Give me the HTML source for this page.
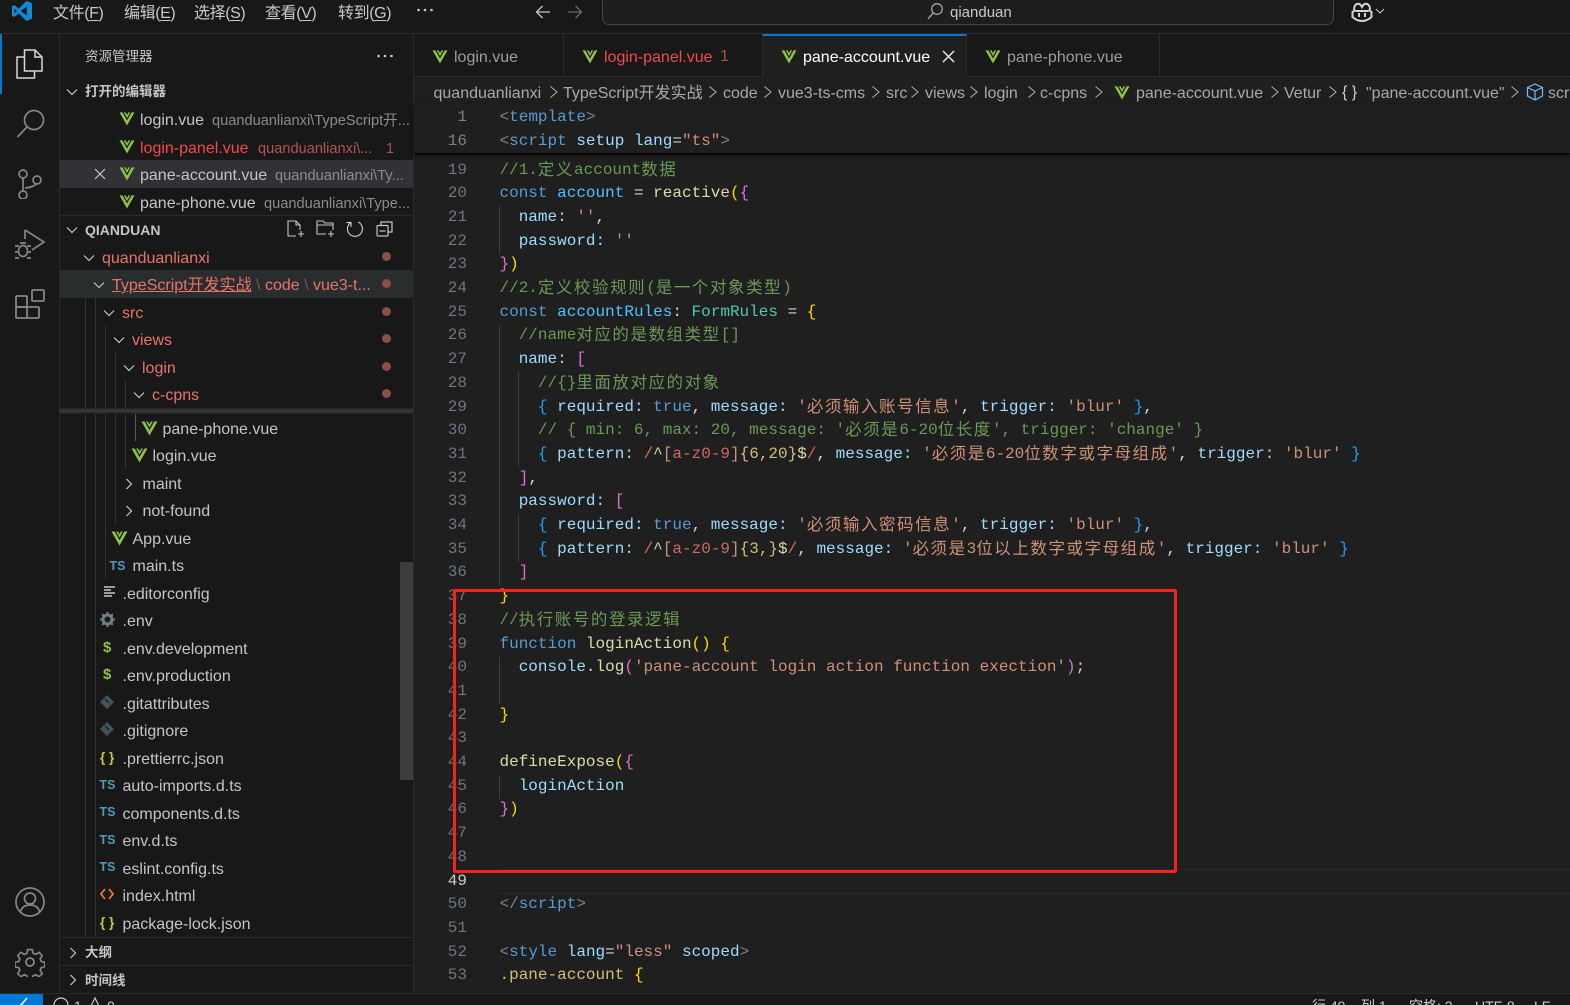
<!DOCTYPE html>
<html><head><meta charset="utf-8"><title>qianduan</title>
<style>
html,body{margin:0;padding:0;background:#1f1f1f}
body{position:relative;width:1570px;height:1005px;overflow:hidden;font-family:"Liberation Sans","Noto Sans CJK SC",sans-serif;font-size:16px;color:#ccc}
div,span.a,svg.a{box-sizing:border-box}
.b,.t,svg.a{position:absolute}
.t{white-space:pre;line-height:20px;height:20px;margin-top:2px}
#st .t{margin-top:0}
svg.a:has(use[href="#vue"]),svg.a:has(use[href="#chv"]),svg.a:has(use[href="#chr"]){margin-top:1px}
.d{font-size:14.6px;color:#8c8c8c}
.r{color:#e8746a}
.f{color:#c5c5c5}
.m{color:#c8c8c8;letter-spacing:-.4px}
.m u{text-underline-offset:2px}
.ts{font-size:12.5px;font-weight:bold;color:#519aba;margin-top:1px}
#code{position:absolute;left:0;top:.5px;width:1570px;font-family:"Liberation Mono","Noto Sans CJK SC",monospace;font-size:16px;color:#d4d4d4}
.l{position:absolute;left:499.5px;white-space:pre;line-height:24px;height:24px}
.n{position:absolute;left:421px;width:46px;text-align:right;color:#6e7681;font-family:"Liberation Mono",monospace;font-size:16px;line-height:24px;height:24px}
.z{font-size:16.5px;letter-spacing:1.55px;font-family:"Noto Sans CJK SC",sans-serif;line-height:1;position:relative;top:1px}
.k{color:#569cd6}.v{color:#9cdcfe}.w{color:#4fc1ff}.u{color:#dcdcaa}.s{color:#ce9178}.c{color:#6a9955}.y{color:#4ec9b0}.g{color:#ffd700}.p{color:#da70d6}.e{color:#d16969}.q{color:#808080}.h{color:#569cd6}.x{color:#d7ba7d}.o{color:#179fff}
.ig{position:absolute;width:1px;background:#404040}
.sg{position:absolute;width:1px;background:#333}
.dot{position:absolute;width:9px;height:9px;border-radius:50%;background:#8a4f49;left:381.5px}
</style></head><body>
<svg width="0" height="0" style="position:absolute"><defs>
<symbol id="vue" viewBox="0 0 16 16"><path d="M0 1.500h3.200L8 10l4.800-8.500H16L8 15.500z" fill="#8dc149"/><path d="M3.200 1.500h2.600L8 5.400l2.200-3.900h2.600L8 10z" fill="#1a1a1a"/><path d="M4.600 1.500h1.900L8 4.200l1.500-2.700h1.900L8 7.600z" fill="#8dc149"/></symbol>
<symbol id="chv" viewBox="0 0 16 16"><path d="M3 5.500l5 5 5-5" fill="none" stroke="#c5c5c5" stroke-width="1.200"/></symbol>
<symbol id="chr" viewBox="0 0 16 16"><path d="M5.500 3l5 5-5 5" fill="none" stroke="#c5c5c5" stroke-width="1.200"/></symbol>
<symbol id="bc" viewBox="0 0 10 16"><path d="M1.500 2.500L8 8l-6.500 5.500" fill="none" stroke="#a9a9a9" stroke-width="1.100"/></symbol>
</defs></svg>

<!-- title bar -->
<div class="b" style="left:0;top:0;width:1570px;height:34px;background:#181818;border-bottom:1px solid #2b2b2b"></div>
<svg class="a" style="left:11px;top:0" width="22" height="22" viewBox="0 0 22 22"><path d="M15.500 1L7.800 8.500 3.200 5 1 6.200v9.600L3.200 17l4.600-3.500 7.700 7.500 5.500-2.300V3.300z" fill="#0e8ad6"/><path d="M15.800 6.500L9.800 11l6 4.500z" fill="#181818"/><path d="M3.500 8.500L6 11l-2.500 2.500z" fill="#181818"/></svg>
<div class="t m" style="left:53px;top:2px">文件(<u>F</u>)</div>
<div class="t m" style="left:124px;top:2px">编辑(<u>E</u>)</div>
<div class="t m" style="left:194px;top:2px">选择(<u>S</u>)</div>
<div class="t m" style="left:265px;top:2px">查看(<u>V</u>)</div>
<div class="t m" style="left:338px;top:2px">转到(<u>G</u>)</div>
<svg class="a" style="left:416px;top:7px" width="18" height="6" fill="#c8c8c8"><circle cx="2.500" cy="3" r="1.300"/><circle cx="9" cy="3" r="1.300"/><circle cx="15.500" cy="3" r="1.300"/></svg>
<svg class="a" style="left:534px;top:3px" width="18" height="18" viewBox="0 0 18 18"><path d="M16 9H2.500M8.500 3l-6 6 6 6" fill="none" stroke="#c8c8c8" stroke-width="1.300"/></svg>
<svg class="a" style="left:566px;top:3px" width="18" height="18" viewBox="0 0 18 18"><path d="M2 9h13.500M9.500 3l6 6-6 6" fill="none" stroke="#6a6a6a" stroke-width="1.300"/></svg>
<div class="b" style="left:602px;top:-6px;width:732px;height:31px;background:#1e1e1e;border:1px solid #454545;border-radius:7px"></div>
<svg class="a" style="left:926px;top:2px" width="18" height="19" viewBox="0 0 18 19"><circle cx="11" cy="7" r="5.300" fill="none" stroke="#a0a0a0" stroke-width="1.300"/><path d="M7.200 11L2 17" stroke="#a0a0a0" stroke-width="1.400"/></svg>
<div class="t" style="left:950px;top:1px;font-size:15px;color:#c8c8c8">qianduan</div>
<svg class="a" style="left:1351px;top:2px" width="22" height="20" viewBox="0 0 22 20"><path d="M4 3.500Q6 1 8.500 2 10 3 11 5 12 3 13.500 2 16 1 18 3.500 19.500 6 18.500 8.500L20.500 10V15Q16 19 11 19 6 19 1.500 15V10L3.500 8.500Q2.500 6 4 3.500z" fill="none" stroke="#d5d5d5" stroke-width="2"/><path d="M8 11v4M14 11v4M4.500 9h13" stroke="#d5d5d5" stroke-width="2"/></svg>
<svg class="a" style="left:1374px;top:4px" width="12" height="14" viewBox="0 0 12 14"><path d="M2 5l4 4 4-4" fill="none" stroke="#c8c8c8" stroke-width="1"/></svg>

<!-- activity bar -->
<div class="b" style="left:0;top:34px;width:60px;height:959px;background:#181818;border-right:1px solid #2b2b2b"></div>
<div class="b" style="left:0;top:34px;width:2px;height:60px;background:#0078d4"></div>
<svg class="a" style="left:15px;top:48px" width="30" height="32" viewBox="0 0 30 32" fill="none" stroke="#d7d7d7" stroke-width="1.500"><path d="M9.500 2h10.500l7 7v14H9.500z"/><path d="M20 2v7h7"/><path d="M9.500 9H2v21h17.500v-7"/></svg>
<svg class="a" style="left:16px;top:108px" width="30" height="32" viewBox="0 0 30 32" fill="none" stroke="#868686" stroke-width="1.700"><circle cx="18" cy="12" r="9.500"/><path d="M11 19L1.500 29"/></svg>
<svg class="a" style="left:17px;top:167px" width="28" height="32" viewBox="0 0 28 32" fill="none" stroke="#868686" stroke-width="1.700"><circle cx="6" cy="7" r="4"/><circle cx="6" cy="28" r="4"/><circle cx="20" cy="13" r="4"/><path d="M6 11v13M19 17Q17 20 8 21"/></svg>
<svg class="a" style="left:14px;top:228px" width="32" height="32" viewBox="0 0 32 32" fill="none" stroke="#868686" stroke-width="1.700"><path d="M11 2l19 12-12 8"/><path d="M11 2v9"/><ellipse cx="9" cy="23" rx="4.500" ry="5.500"/><path d="M1 18h4M13 18h4M1 24h3M14 24h3M1 30h4M13 30h4M6 15h6"/></svg>
<svg class="a" style="left:15px;top:288px" width="32" height="32" viewBox="0 0 32 32" fill="none" stroke="#868686" stroke-width="1.800"><rect x="1" y="8" width="11" height="11" rx="1"/><rect x="1" y="19" width="23" height="11" rx="1"/><path d="M12 19v11"/><rect x="17" y="2" width="12" height="11" rx="1"/></svg>
<svg class="a" style="left:15px;top:887px" width="30" height="30" viewBox="0 0 30 30" fill="none" stroke="#868686" stroke-width="1.700"><circle cx="15" cy="15" r="14"/><circle cx="15" cy="11.500" r="5.500"/><path d="M5.500 25Q7 18 15 18t9.500 7"/></svg>
<svg class="a" style="left:15px;top:947px" width="30" height="30" viewBox="0 0 30 30" fill="none" stroke="#868686" stroke-width="1.800"><circle cx="15" cy="15" r="4"/><path d="M12.500 1.500h5l.8 4 3 1.300 3.500-2.300 3.500 3.500-2.300 3.500 1.300 3 4 .8v0 0l-.3 0v5l-3.700.8-1.300 3 2.300 3.500-3.500 3.500-3.500-2.300-3 1.300-.8 4h-5l-.8-4-3-1.300-3.500 2.300-3.500-3.500 2.300-3.500-1.300-3-4-.8v-5l4-.8 1.300-3-2.300-3.500 3.500-3.500 3.500 2.300 3-1.300z" transform="translate(1.200 1.200) scale(.92)"/></svg>

<!-- sidebar -->
<div class="b" style="left:60px;top:34px;width:354px;height:959px;background:#181818;border-right:1px solid #2b2b2b"></div>
<div class="t" style="left:85px;top:45px;font-size:13.5px;color:#c5c5c5">资源管理器</div>
<svg class="a" style="left:376px;top:53px" width="18" height="6" fill="#c8c8c8"><circle cx="2.500" cy="3" r="1.300"/><circle cx="9" cy="3" r="1.300"/><circle cx="15.500" cy="3" r="1.300"/></svg>
<svg class="a" style="left:64px;top:83px" width="16" height="16"><use href="#chv"/></svg>
<div class="t" style="left:85px;top:80px;font-size:13.5px;font-weight:bold;color:#c5c5c5">打开的编辑器</div>
<div class="b" style="left:60px;top:160px;width:353px;height:28px;background:#323236"></div>
<svg class="a" style="left:119px;top:110px" width="16" height="15"><use href="#vue"/></svg>
<div class="t" style="left:140px;top:109px;color:#c5c5c5">login.vue</div>
<div class="t d" style="left:212px;top:109px;width:198px;overflow:hidden">quanduanlianxi\TypeScript开...</div>
<svg class="a" style="left:119px;top:138px" width="16" height="15"><use href="#vue"/></svg>
<div class="t" style="left:140px;top:137px;color:#f14c4c">login-panel.vue</div>
<div class="t d" style="left:258px;top:137px;color:#b0564e">quanduanlianxi\...</div>
<div class="t" style="left:386px;top:137px;font-size:14.500px;color:#a9564e">1</div>
<svg class="a" style="left:93px;top:167px" width="14" height="14" viewBox="0 0 14 14"><path d="M2 2l10 10M12 2L2 12" stroke="#c8c8c8" stroke-width="1.200"/></svg>
<svg class="a" style="left:119px;top:165px" width="16" height="15"><use href="#vue"/></svg>
<div class="t" style="left:140px;top:164px;color:#c5c5c5">pane-account.vue</div>
<div class="t d" style="left:275px;top:164px">quanduanlianxi\Ty...</div>
<svg class="a" style="left:119px;top:193px" width="16" height="15"><use href="#vue"/></svg>
<div class="t" style="left:140px;top:192px;color:#c5c5c5">pane-phone.vue</div>
<div class="t d" style="left:264px;top:192px;width:147px;overflow:hidden">quanduanlianxi\Type...</div>
<div class="b" style="left:60px;top:215px;width:353px;height:1px;background:#2b2b2b"></div>
<svg class="a" style="left:64px;top:221px" width="16" height="16"><use href="#chv"/></svg>
<div class="t" style="left:85px;top:218px;font-size:14px;font-weight:bold;color:#c5c5c5">QIANDUAN</div>
<svg class="a" style="left:287px;top:220px" width="18" height="18" viewBox="0 0 18 18" fill="none" stroke="#c5c5c5" stroke-width="1.100"><path d="M9 16H1V1h8l4 4v5M9 1v4h4M14 11v6M11 14h6"/></svg>
<svg class="a" style="left:316px;top:220px" width="20" height="18" viewBox="0 0 20 18" fill="none" stroke="#c5c5c5" stroke-width="1.100"><path d="M10 14H1V1h6l2 2h8v7M1 5h16M15 11v6M12 14h6"/></svg>
<svg class="a" style="left:346px;top:220px" width="18" height="18" viewBox="0 0 18 18" fill="none" stroke="#c5c5c5" stroke-width="1.200"><path d="M5 2.500A7.500 7.500 0 1 0 12 2M5 7V2.500H.5"/></svg>
<svg class="a" style="left:376px;top:221px" width="17" height="16" viewBox="0 0 17 16" fill="none" stroke="#c5c5c5" stroke-width="1.200"><path d="M5 4V1h11v10h-4"/><rect x="1" y="4.500" width="11" height="10.500" rx="1"/><path d="M3.500 10h6"/></svg>

<svg class="a" style="left:81px;top:249px" width="16" height="16"><use href="#chv"/></svg>
<div class="t r" style="left:102px;top:247px">quanduanlianxi</div>
<div class="dot" style="top:252px"></div>
<div class="b" style="left:60px;top:270px;width:353px;height:28px;background:#2a2d2e"></div>
<svg class="a" style="left:91px;top:276px" width="16" height="16"><use href="#chv"/></svg>
<div class="t r" style="left:112px;top:274px"><span style="text-decoration:underline">TypeScript开发实战</span><span style="color:#7a5550"> \ </span>code<span style="color:#7a5550"> \ </span>vue3-t...</div>
<div class="dot" style="top:279px"></div>
<svg class="a" style="left:101px;top:304px" width="16" height="16"><use href="#chv"/></svg>
<div class="t r" style="left:122px;top:302px">src</div><div class="dot" style="top:307px"></div>
<svg class="a" style="left:111px;top:331px" width="16" height="16"><use href="#chv"/></svg>
<div class="t r" style="left:132px;top:329px">views</div><div class="dot" style="top:334px"></div>
<svg class="a" style="left:121px;top:359px" width="16" height="16"><use href="#chv"/></svg>
<div class="t r" style="left:142px;top:357px">login</div><div class="dot" style="top:362px"></div>
<svg class="a" style="left:131px;top:386px" width="16" height="16"><use href="#chv"/></svg>
<div class="t r" style="left:152px;top:384px">c-cpns</div><div class="dot" style="top:389px"></div>

<!-- tree guides -->
<div class="sg" style="left:85px;top:298px;height:640px"></div>
<div class="sg" style="left:95px;top:298px;height:640px"></div>
<div class="sg" style="left:105px;top:326px;height:253px"></div>
<div class="sg" style="left:115px;top:353px;height:171px"></div>
<div class="sg" style="left:125px;top:380px;height:89px"></div>
<div class="sg" style="left:135px;top:408px;height:33px;background:#585858"></div>
<div class="b" style="left:60px;top:408px;width:353px;height:6px;background:linear-gradient(#26262a,#3b3b3f 60%,#1c1c1c)"></div>

<svg class="a" style="left:141px;top:419px" width="17" height="16"><use href="#vue"/></svg>
<div class="t f" style="left:162.500px;top:418px">pane-phone.vue</div>
<svg class="a" style="left:131px;top:446px" width="17" height="16"><use href="#vue"/></svg>
<div class="t f" style="left:152.500px;top:445px">login.vue</div>
<svg class="a" style="left:121px;top:475px" width="16" height="16"><use href="#chr"/></svg>
<div class="t f" style="left:142.500px;top:473px">maint</div>
<svg class="a" style="left:121px;top:502px" width="16" height="16"><use href="#chr"/></svg>
<div class="t f" style="left:142.500px;top:500px">not-found</div>
<svg class="a" style="left:111px;top:529px" width="17" height="16"><use href="#vue"/></svg>
<div class="t f" style="left:132.500px;top:528px">App.vue</div>
<div class="t ts" style="left:109.500px;top:555px">TS</div>
<div class="t f" style="left:132.500px;top:555px">main.ts</div>

<svg class="a" style="left:103px;top:585px" width="13" height="14" viewBox="0 0 13 14" stroke="#c8c8c8" stroke-width="1.500"><path d="M1 2h11M1 5h7M1 8h11M1 11h8"/></svg>
<div class="t f" style="left:122.500px;top:583px">.editorconfig</div>
<svg class="a" style="left:100px;top:612px" width="15" height="15" viewBox="0 0 15 15"><circle cx="7.500" cy="7.500" r="4.500" fill="none" stroke="#6d8086" stroke-width="3"/><path d="M7.500 0v3M7.500 12v3M0 7.500h3M12 7.500h3M2.200 2.200l2 2M10.800 10.800l2 2M12.800 2.200l-2 2M4.200 10.800l-2 2" stroke="#6d8086" stroke-width="2"/></svg>
<div class="t f" style="left:122.500px;top:610px">.env</div>
<div class="t" style="left:103px;top:636px;font-size:15px;font-weight:bold;color:#8dc149">$</div>
<div class="t f" style="left:122.500px;top:638px">.env.development</div>
<div class="t" style="left:103px;top:663px;font-size:15px;font-weight:bold;color:#8dc149">$</div>
<div class="t f" style="left:122.500px;top:665px">.env.production</div>
<svg class="a" style="left:100px;top:695px" width="14" height="14" viewBox="0 0 14 14"><path d="M7 0l7 7-7 7-7-7z" fill="#41535b"/><path d="M5 4l4 4" stroke="#181818" stroke-width="1.200"/></svg>
<div class="t f" style="left:122.500px;top:693px">.gitattributes</div>
<svg class="a" style="left:100px;top:722px" width="14" height="14" viewBox="0 0 14 14"><path d="M7 0l7 7-7 7-7-7z" fill="#41535b"/><path d="M5 4l4 4" stroke="#181818" stroke-width="1.200"/></svg>
<div class="t f" style="left:122.500px;top:720px">.gitignore</div>
<div class="t" style="left:100px;top:746px;font-size:13.500px;font-weight:bold;color:#cbcb41">{ }</div>
<div class="t f" style="left:122.500px;top:748px">.prettierrc.json</div>
<div class="t ts" style="left:99.500px;top:774px">TS</div>
<div class="t f" style="left:122.500px;top:775px">auto-imports.d.ts</div>
<div class="t ts" style="left:99.500px;top:801px">TS</div>
<div class="t f" style="left:122.500px;top:803px">components.d.ts</div>
<div class="t ts" style="left:99.500px;top:829px">TS</div>
<div class="t f" style="left:122.500px;top:830px">env.d.ts</div>
<div class="t ts" style="left:99.500px;top:856px">TS</div>
<div class="t f" style="left:122.500px;top:858px">eslint.config.ts</div>
<svg class="a" style="left:100px;top:887px" width="14" height="14" viewBox="0 0 14 14" fill="none" stroke="#e37933" stroke-width="1.800"><path d="M5 2L1 7l4 5M9 2l4 5-4 5"/></svg>
<div class="t f" style="left:122.500px;top:885px">index.html</div>
<div class="t" style="left:100px;top:911px;font-size:13.500px;font-weight:bold;color:#cbcb41">{ }</div>
<div class="t f" style="left:122.500px;top:913px">package-lock.json</div>

<div class="b" style="left:400px;top:562px;width:13px;height:218px;background:#3d3d3d"></div>
<div class="b" style="left:60px;top:937px;width:353px;height:56px;background:#181818;border-top:1px solid #2b2b2b"></div>
<div class="b" style="left:60px;top:965px;width:353px;height:1px;background:#2b2b2b"></div>
<svg class="a" style="left:65px;top:944px" width="16" height="16"><use href="#chr"/></svg>
<div class="t" style="left:85px;top:941px;font-size:13.500px;font-weight:bold;color:#c5c5c5">大纲</div>
<svg class="a" style="left:65px;top:971px" width="16" height="16"><use href="#chr"/></svg>
<div class="t" style="left:85px;top:969px;font-size:13.500px;font-weight:bold;color:#c5c5c5">时间线</div>

<!-- tabs -->
<div class="b" style="left:414px;top:34px;width:1156px;height:43px;background:#181818;border-bottom:1px solid #2b2b2b"></div>
<div class="b" style="left:563px;top:34px;width:1px;height:42px;background:#2b2b2b"></div>
<div class="b" style="left:1159px;top:34px;width:1px;height:42px;background:#2b2b2b"></div>
<div class="b" style="left:762px;top:34px;width:205px;height:43px;background:#1f1f1f;border-top:2px solid #0078d4;border-left:1px solid #2b2b2b;border-right:1px solid #2b2b2b"></div>
<svg class="a" style="left:432px;top:48px" width="16" height="15"><use href="#vue"/></svg>
<div class="t" style="left:454px;top:46px;color:#9d9d9d">login.vue</div>
<svg class="a" style="left:582px;top:48px" width="16" height="15"><use href="#vue"/></svg>
<div class="t" style="left:604px;top:46px;color:#f14c4c">login-panel.vue</div>
<div class="t" style="left:720px;top:45px;color:#a6564e">1</div>
<svg class="a" style="left:781px;top:48px" width="16" height="15"><use href="#vue"/></svg>
<div class="t" style="left:803px;top:46px;color:#fff">pane-account.vue</div>
<svg class="a" style="left:942px;top:50px" width="13" height="13" viewBox="0 0 13 13"><path d="M1 1l11 11M12 1L1 12" stroke="#e8e8e8" stroke-width="1.500"/></svg>
<svg class="a" style="left:985px;top:48px" width="16" height="15"><use href="#vue"/></svg>
<div class="t" style="left:1007px;top:46px;color:#9d9d9d">pane-phone.vue</div>

<!-- breadcrumbs -->
<div class="b" style="left:414px;top:77px;width:1156px;height:916px;background:#1f1f1f"></div>
<div class="t" style="left:433.500px;top:80px;margin-top:2px;color:#a9a9a9;top:82px">quanduanlianxi</div>
<svg class="a" style="left:549px;top:84px" width="10" height="16"><use href="#bc"/></svg>
<div class="t" style="left:563px;top:82px;color:#a9a9a9">TypeScript开发实战</div>
<svg class="a" style="left:708px;top:84px" width="10" height="16"><use href="#bc"/></svg>
<div class="t" style="left:723px;top:82px;color:#a9a9a9">code</div>
<svg class="a" style="left:763px;top:84px" width="10" height="16"><use href="#bc"/></svg>
<div class="t" style="left:778px;top:82px;color:#a9a9a9">vue3-ts-cms</div>
<svg class="a" style="left:871px;top:84px" width="10" height="16"><use href="#bc"/></svg>
<div class="t" style="left:886px;top:82px;color:#a9a9a9">src</div>
<svg class="a" style="left:910px;top:84px" width="10" height="16"><use href="#bc"/></svg>
<div class="t" style="left:925px;top:82px;color:#a9a9a9">views</div>
<svg class="a" style="left:969px;top:84px" width="10" height="16"><use href="#bc"/></svg>
<div class="t" style="left:984px;top:82px;color:#a9a9a9">login</div>
<svg class="a" style="left:1027px;top:84px" width="10" height="16"><use href="#bc"/></svg>
<div class="t" style="left:1040px;top:82px;color:#a9a9a9">c-cpns</div>
<svg class="a" style="left:1094px;top:84px" width="10" height="16"><use href="#bc"/></svg>
<svg class="a" style="left:1114px;top:84px" width="16" height="15"><use href="#vue"/></svg>
<div class="t" style="left:1136px;top:82px;color:#a9a9a9">pane-account.vue</div>
<svg class="a" style="left:1270px;top:84px" width="10" height="16"><use href="#bc"/></svg>
<div class="t" style="left:1284px;top:82px;color:#a9a9a9">Vetur</div>
<svg class="a" style="left:1328px;top:84px" width="10" height="16"><use href="#bc"/></svg>
<div class="t" style="left:1342px;top:81px;color:#d0d0d0;font-size:16px">{ }</div>
<div class="t" style="left:1366px;top:82px;color:#a9a9a9">"pane-account.vue"</div>
<svg class="a" style="left:1510px;top:84px" width="10" height="16"><use href="#bc"/></svg>
<svg class="a" style="left:1526px;top:83px" width="18" height="18" viewBox="0 0 18 18" fill="none" stroke="#75beff" stroke-width="1.200"><path d="M9 1l7.500 3.500v8.500L9 17l-7.500-4V4.500zM1.500 4.500L9 8l7.500-3.500M9 8v9"/></svg>
<div class="t" style="left:1548px;top:82px;width:23px;overflow:hidden;color:#a9a9a9">script</div>

<!-- sticky -->
<div class="b" style="left:414px;top:104px;width:1156px;height:49px;background:#1f1f1f;box-shadow:0 2px 3px #000;z-index:3"></div>
<div style="position:absolute;left:0;top:0;z-index:4;font-family:'Liberation Mono',monospace">
<div class="n" style="top:104.500px;color:#808080">1</div>
<div class="l" style="top:104.500px"><span class="q">&lt;</span><span class="h">template</span><span class="q">&gt;</span></div>
<div class="n" style="top:128.500px;color:#808080">16</div>
<div class="l" style="top:128.500px"><span class="q">&lt;</span><span class="h">script</span> <span class="v">setup</span> <span class="v">lang</span>=<span class="s">"ts"</span><span class="q">&gt;</span></div>
</div>

<!-- current line -->
<div class="b" style="left:499px;top:869px;width:1071px;height:25px;border-top:1px solid #2a2a2a;border-bottom:1px solid #2a2a2a"></div>

<!-- indent guides -->
<div class="ig" style="left:499px;top:206px;height:48px"></div>
<div class="ig" style="left:499px;top:325px;height:261px"></div>
<div class="ig" style="left:518px;top:372px;height:95px"></div>
<div class="ig" style="left:518px;top:515px;height:47px"></div>
<div class="ig" style="left:499px;top:657px;height:47px"></div>
<div class="ig" style="left:499px;top:775px;height:24px"></div>

<!-- code -->
<div id="code">
<div class="n" style="top:157px">19</div><div class="l" style="top:157px"><span class="c">//1.<span class="z">定义</span>account<span class="z">数据</span></span></div>
<div class="n" style="top:180.700px">20</div><div class="l" style="top:180.700px"><span class="k">const</span> <span class="w">account</span> = <span class="u">reactive</span><span class="g">(</span><span class="p">{</span></div>
<div class="n" style="top:204.400px">21</div><div class="l" style="top:204.400px">  <span class="v">name</span><span class="v">:</span> <span class="s">''</span>,</div>
<div class="n" style="top:228.100px">22</div><div class="l" style="top:228.100px">  <span class="v">password</span><span class="v">:</span> <span class="s">''</span></div>
<div class="n" style="top:251.800px">23</div><div class="l" style="top:251.800px"><span class="p">}</span><span class="g">)</span></div>
<div class="n" style="top:275.500px">24</div><div class="l" style="top:275.500px"><span class="c">//2.<span class="z">定义校验规则</span>(<span class="z">是一个对象类型</span>)</span></div>
<div class="n" style="top:299.200px">25</div><div class="l" style="top:299.200px"><span class="k">const</span> <span class="w">accountRules</span>: <span class="y">FormRules</span> = <span class="g">{</span></div>
<div class="n" style="top:322.900px">26</div><div class="l" style="top:322.900px">  <span class="c">//name<span class="z">对应的是数组类型</span>[]</span></div>
<div class="n" style="top:346.600px">27</div><div class="l" style="top:346.600px">  <span class="v">name</span><span class="v">:</span> <span class="p">[</span></div>
<div class="n" style="top:370.300px">28</div><div class="l" style="top:370.300px">    <span class="c">//{}<span class="z">里面放对应的对象</span></span></div>
<div class="n" style="top:394px">29</div><div class="l" style="top:394px">    <span class="o">{</span> <span class="v">required</span><span class="v">:</span> <span class="k">true</span>, <span class="v">message</span><span class="v">:</span> <span class="s">'<span class="z">必须输入账号信息</span>'</span>, <span class="v">trigger</span><span class="v">:</span> <span class="s">'blur'</span> <span class="o">}</span>,</div>
<div class="n" style="top:417.700px">30</div><div class="l" style="top:417.700px">    <span class="c">// { min: 6, max: 20, message: '<span class="z">必须是</span>6-20<span class="z">位长度</span>', trigger: 'change' }</span></div>
<div class="n" style="top:441.400px">31</div><div class="l" style="top:441.400px">    <span class="o">{</span> <span class="v">pattern</span><span class="v">:</span> <span class="e">/</span><span class="u">^</span><span class="s">[</span><span class="e">a-z0-9</span><span class="s">]</span><span class="x">{6,20}</span><span class="u">$</span><span class="e">/</span>, <span class="v">message</span><span class="v">:</span> <span class="s">'<span class="z">必须是</span>6-20<span class="z">位数字或字母组成</span>'</span>, <span class="v">trigger</span><span class="v">:</span> <span class="s">'blur'</span> <span class="o">}</span></div>
<div class="n" style="top:465.100px">32</div><div class="l" style="top:465.100px">  <span class="p">]</span>,</div>
<div class="n" style="top:488.800px">33</div><div class="l" style="top:488.800px">  <span class="v">password</span><span class="v">:</span> <span class="p">[</span></div>
<div class="n" style="top:512.500px">34</div><div class="l" style="top:512.500px">    <span class="o">{</span> <span class="v">required</span><span class="v">:</span> <span class="k">true</span>, <span class="v">message</span><span class="v">:</span> <span class="s">'<span class="z">必须输入密码信息</span>'</span>, <span class="v">trigger</span><span class="v">:</span> <span class="s">'blur'</span> <span class="o">}</span>,</div>
<div class="n" style="top:536.200px">35</div><div class="l" style="top:536.200px">    <span class="o">{</span> <span class="v">pattern</span><span class="v">:</span> <span class="e">/</span><span class="u">^</span><span class="s">[</span><span class="e">a-z0-9</span><span class="s">]</span><span class="x">{3,}</span><span class="u">$</span><span class="e">/</span>, <span class="v">message</span><span class="v">:</span> <span class="s">'<span class="z">必须是</span>3<span class="z">位以上数字或字母组成</span>'</span>, <span class="v">trigger</span><span class="v">:</span> <span class="s">'blur'</span> <span class="o">}</span></div>
<div class="n" style="top:559.900px">36</div><div class="l" style="top:559.900px">  <span class="p">]</span></div>
<div class="n" style="top:583.600px">37</div><div class="l" style="top:583.600px"><span class="g">}</span></div>
<div class="n" style="top:607.300px">38</div><div class="l" style="top:607.300px"><span class="c">//<span class="z">执行账号的登录逻辑</span></span></div>
<div class="n" style="top:631px">39</div><div class="l" style="top:631px"><span class="k">function</span> <span class="u">loginAction</span><span class="g">()</span> <span class="g">{</span></div>
<div class="n" style="top:654.700px">40</div><div class="l" style="top:654.700px">  <span class="v">console</span>.<span class="u">log</span><span class="p">(</span><span class="s">'pane-account login action function exection'</span><span class="p">)</span>;</div>
<div class="n" style="top:678.400px">41</div>
<div class="n" style="top:702.100px">42</div><div class="l" style="top:702.100px"><span class="g">}</span></div>
<div class="n" style="top:725.800px">43</div>
<div class="n" style="top:749.500px">44</div><div class="l" style="top:749.500px"><span class="u">defineExpose</span><span class="g">(</span><span class="p">{</span></div>
<div class="n" style="top:773.200px">45</div><div class="l" style="top:773.200px">  <span class="v">loginAction</span></div>
<div class="n" style="top:796.900px">46</div><div class="l" style="top:796.900px"><span class="p">}</span><span class="g">)</span></div>
<div class="n" style="top:820.600px">47</div>
<div class="n" style="top:844.300px">48</div>
<div class="n" style="top:868px;color:#ccc">49</div>
<div class="n" style="top:891.700px">50</div><div class="l" style="top:891.700px"><span class="q">&lt;/</span><span class="h">script</span><span class="q">&gt;</span></div>
<div class="n" style="top:915.400px">51</div>
<div class="n" style="top:939.100px">52</div><div class="l" style="top:939.100px"><span class="q">&lt;</span><span class="h">style</span> <span class="v">lang</span>=<span class="s">"less"</span> <span class="v">scoped</span><span class="q">&gt;</span></div>
<div class="n" style="top:962.800px">53</div><div class="l" style="top:962.800px"><span class="x">.pane-account</span> <span class="g">{</span></div>
</div>

<!-- red annotation -->
<div class="b" style="left:453px;top:589px;width:724px;height:284px;border:3px solid #f5231b;border-radius:2px;z-index:6"></div>

<!-- status bar -->
<div id="st" class="b" style="left:0;top:993px;width:1570px;height:12px;background:#181818;border-top:1px solid #2b2b2b;z-index:7;overflow:hidden">
<div class="b" style="left:0;top:0;width:43px;height:12px;background:#0078d4"></div>
<svg class="a" style="left:14px;top:2px" width="16" height="12" viewBox="0 0 16 12" fill="none" stroke="#fff" stroke-width="1.500"><path d="M3 12l5-4 5-6"/></svg>
<svg class="a" style="left:53px;top:3px" width="16" height="16" viewBox="0 0 16 16" fill="none" stroke="#c8c8c8" stroke-width="1.200"><circle cx="8" cy="8" r="7"/></svg>
<div class="t" style="left:74px;top:2px;font-size:14px">1</div>
<svg class="a" style="left:88px;top:3px" width="14" height="14" viewBox="0 0 14 14" fill="none" stroke="#c8c8c8" stroke-width="1.200"><path d="M7 1l6 12H1z"/></svg>
<div class="t" style="left:107px;top:2px;font-size:14px">0</div>
<div class="t" style="left:1312px;top:2px;font-size:14px">行 49，</div>
<div class="t" style="left:1361px;top:2px;font-size:14px">列 1</div>
<div class="t" style="left:1409px;top:2px;font-size:14px">空格: 2</div>
<div class="t" style="left:1475px;top:2px;font-size:14px">UTF-8</div>
<div class="t" style="left:1534px;top:2px;font-size:14px">LF</div>
</div>
</body></html>
